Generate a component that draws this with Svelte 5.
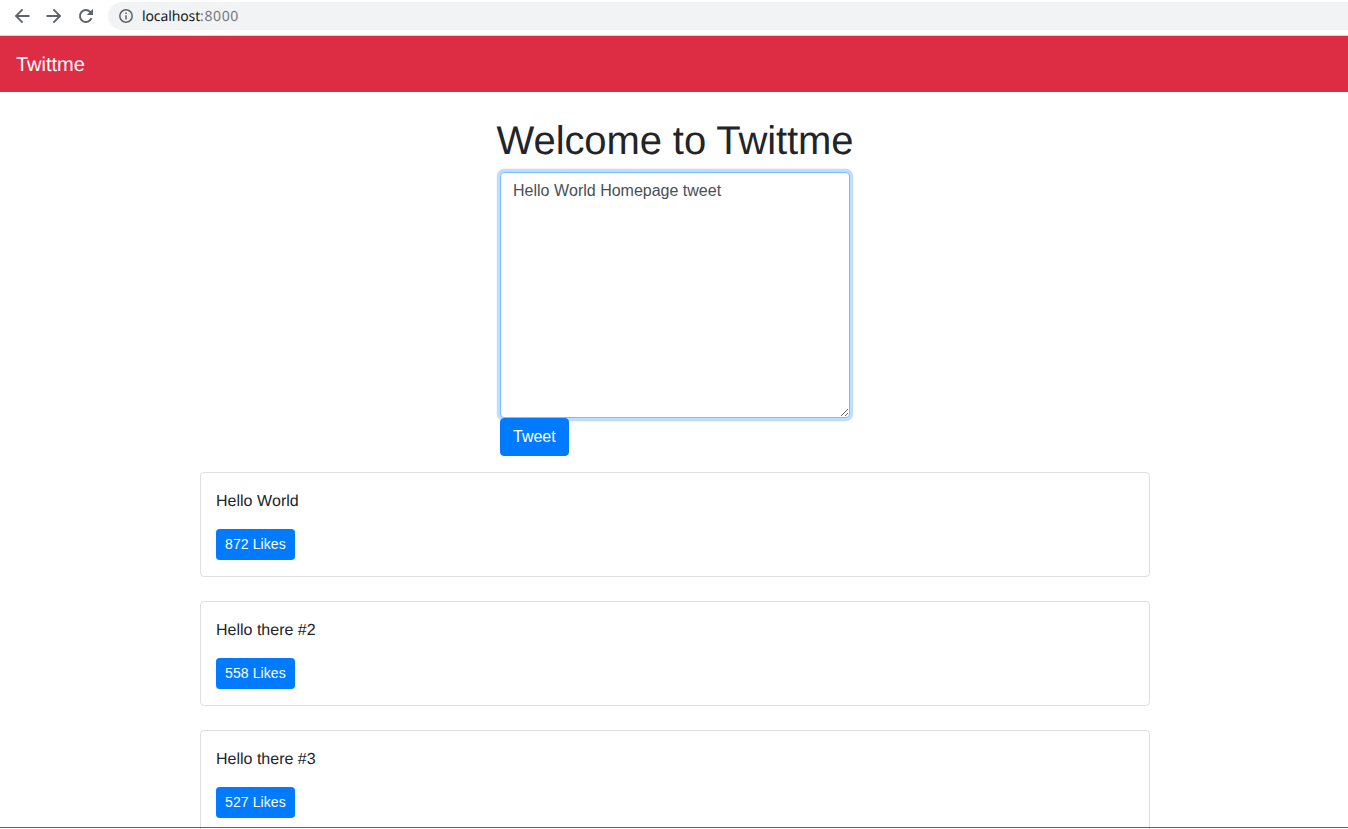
<script lang="ts">
	const tweets = [
		{ id: 1, content: 'Hello World', likes: 872 },
		{ id: 2, content: 'Hello there #2', likes: 558 },
		{ id: 3, content: 'Hello there #3', likes: 527 }
	];

	let draft = $state('Hello World Homepage tweet');
	let box: HTMLTextAreaElement | undefined = $state();

	$effect(() => {
		box?.focus();
	});
</script>

<div class="chrome">
	<button class="nav-icon" aria-label="Back">
		<svg viewBox="0 0 16 16" width="16" height="16">
			<path d="M15.5 8H2.2M8.6 1.4 2 8l6.6 6.6" />
		</svg>
	</button>
	<button class="nav-icon" aria-label="Forward">
		<svg viewBox="0 0 16 16" width="16" height="16">
			<path d="M.5 8h13.3M7.4 1.4 14 8l-6.6 6.6" />
		</svg>
	</button>
	<button class="nav-icon" aria-label="Reload">
		<svg viewBox="0 0 16 16" width="16" height="16">
			<path d="M13.5 10.2A6 6 0 1 1 12.2 3.8L14 5.6" />
			<path class="solid" d="M15 .7V7H8.7Z" />
		</svg>
	</button>
	<div class="omnibox">
		<svg class="info" viewBox="0 0 16 16" width="16" height="16">
			<circle cx="8" cy="8" r="6.2" />
			<path d="M8 7.2v4.2M8 4.4v1.5" />
		</svg>
		<span class="host">localhost</span><span class="port">:8000</span>
	</div>
</div>

<nav class="navbar">
	<span class="brand">Twittme</span>
</nav>

<main class="container">
	<h1>Welcome to Twittme</h1>
	<form class="tweet-form" onsubmit={(e) => e.preventDefault()}>
		<textarea bind:this={box} bind:value={draft} class="control"></textarea>
		<button class="btn" type="submit">Tweet</button>
	</form>

	{#each tweets as tweet (tweet.id)}
		<div class="card">
			<p>{tweet.content}</p>
			<button class="btn small">{tweet.likes} Likes</button>
		</div>
	{/each}
</main>

<style>
	:global(html),
	:global(body) {
		height: 829px;
		overflow: hidden;
	}
	:global(body) {
		background: #fff;
		color: #212529;
		font-family: 'Liberation Sans', Arial, sans-serif;
		font-size: 16px;
		line-height: 1.5;
		text-rendering: geometricPrecision;
	}
	/* the captured page was 2px wider than the window */
	:global(#app) {
		width: 1350px;
	}
	/* dark edge of the captured window */
	:global(body)::after {
		content: '';
		position: fixed;
		left: 0;
		right: 0;
		bottom: 1px;
		height: 1px;
		background: #5f6368;
	}
	.chrome {
		display: flex;
		align-items: center;
		height: 32px;
		padding: 0 0 3px 6px;
		background: #fff;
		border-bottom: 1px solid #d6d7d9;
	}
	.nav-icon {
		width: 32px;
		height: 32px;
		padding: 0;
		display: grid;
		place-items: center;
		border: 0;
		background: none;
	}
	.nav-icon svg path {
		fill: none;
		stroke: #5f6368;
		stroke-width: 1.9;
	}
	.nav-icon svg path.solid {
		fill: #5f6368;
		stroke: none;
	}
	.omnibox {
		flex: 1;
		display: flex;
		align-items: center;
		height: 28px;
		margin-left: 6px;
		padding-left: 10px;
		border-radius: 14px 0 0 14px;
		background: #f1f3f4;
		font-family: 'Noto Sans', sans-serif;
		font-size: 14px;
	}
	.info {
		margin-right: 8px;
		fill: none;
		stroke: #5f6368;
		stroke-width: 1.5;
	}
	.host {
		color: #202124;
		letter-spacing: -0.12px;
	}
	.port {
		color: #74777b;
		letter-spacing: 0.6px;
	}
	.navbar {
		display: flex;
		align-items: center;
		padding: 8px 16px;
		background: #dc2d45;
	}
	.brand {
		padding: 6px 0 4px;
		font-size: 20px;
		color: #fff;
	}
	.container {
		width: 950px;
		margin: 0 auto;
		padding-top: 24px;
	}
	h1 {
		margin: 0 0 7px;
		padding-top: 1px;
		font-size: 40px;
		font-weight: 500;
		line-height: 1.2;
		letter-spacing: -0.1px;
		text-align: center;
	}
	.tweet-form {
		width: 350px;
		margin: 0 auto 16px;
	}
	.control {
		display: block;
		box-sizing: border-box;
		width: 100%;
		height: 246px;
		padding: 6px 12px;
		border: 1px solid #80bdff;
		border-radius: 4px;
		outline: 0;
		box-shadow: 0 0 0 3.2px rgba(0, 123, 255, 0.25);
		color: #495057;
		font: inherit;
		font-kerning: none;
		line-height: 1.5;
	}
	.btn {
		display: block;
		padding: 6px 12px;
		border: 1px solid #007bff;
		border-radius: 4px;
		background: #007bff;
		color: #fff;
		font: inherit;
		line-height: 1.5;
	}
	.btn.small {
		padding: 4px 8px;
		border-radius: 3.2px;
		font-size: 14px;
		letter-spacing: 0.1px;
	}
	.card {
		padding: 16px 15px;
		margin-bottom: 24px;
		border: 1px solid rgba(0, 0, 0, 0.125);
		border-radius: 4px;
	}
	.card p {
		margin: 0 0 15px;
		padding-top: 1px;
		font-kerning: none;
	}
</style>
